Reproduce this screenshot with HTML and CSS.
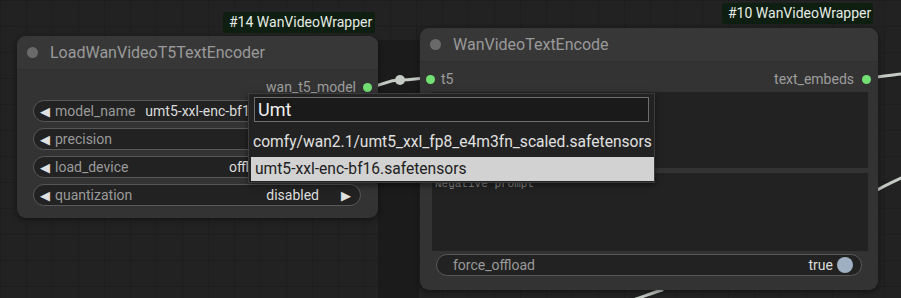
FILE: index.html
```html
<!DOCTYPE html>
<html>
<head>
<meta charset="utf-8">
<link rel="stylesheet" href="styles.css">
</head>
<body>
<div class="canvas">
  <div class="band"></div>
  <svg class="links" width="901" height="298" viewBox="0 0 901 298">
    <path d="M368 87 C 385 86, 385 80, 400 80 S 415 78, 430 78" />
    <circle cx="400" cy="80" r="5" class="mid"/>
    <path d="M867 78 C 880 77, 890 75, 901 74" />
    <path d="M870 194 C 880 188, 890 183, 901 178" />
    <path d="M636 299 C 645 296, 652 293, 662 290" />
  </svg>

  <div class="badge badge-14">#14 WanVideoWrapper</div>
  <div class="badge badge-10">#10 WanVideoWrapper</div>

  <div class="node node-left">
    <div class="node-title"><span class="dot-grey"></span><span>LoadWanVideoT5TextEncoder</span></div>
    <div class="node-body">
      <div class="io-row io-right"><span class="io-label">wan_t5_model</span><span class="slot"></span></div>
      <div class="widgets">
        <div class="widget"><span class="arrow">◀</span><span class="w-name">model_name</span><span class="w-val w-val-left">umt5-xxl-enc-bf16.safetensors</span></div>
        <div class="widget"><span class="arrow">◀</span><span class="w-name">precision</span><span class="fill"></span><span class="w-val">bf16</span><span class="arrow arrow-r">▶</span></div>
        <div class="widget"><span class="arrow">◀</span><span class="w-name">load_device</span><span class="fill"></span><span class="w-val">offload_device</span><span class="arrow arrow-r">▶</span></div>
        <div class="widget"><span class="arrow">◀</span><span class="w-name">quantization</span><span class="fill"></span><span class="w-val">disabled</span><span class="arrow arrow-r">▶</span></div>
      </div>
    </div>
  </div>

  <div class="node node-right">
    <div class="node-title"><span class="dot-grey"></span><span>WanVideoTextEncode</span></div>
    <div class="node-body">
      <div class="io-row"><span class="slot"></span><span class="io-label io-in">t5</span><span class="fill"></span><span class="io-label">text_embeds</span><span class="slot"></span></div>
      <div class="textareas">
        <div class="textarea">positive_prompt</div>
        <div class="textarea ta2">Negative prompt</div>
      </div>
      <div class="widget toggle"><span class="w-name">force_offload</span><span class="fill"></span><span class="w-val">true</span><span class="knob"></span></div>
    </div>
  </div>

  <div class="menu">
    <div class="menu-input">Umt</div>
    <div class="menu-item first">comfy/wan2.1/umt5_xxl_fp8_e4m3fn_scaled.safetensors</div>
    <div class="menu-item active">umt5-xxl-enc-bf16.safetensors</div>
  </div>
</div>
</body>
</html>
```

FILE: styles.css
```css
* { box-sizing: border-box; }
html, body { margin: 0; padding: 0; background: #202020; }
body { font-family: Roboto, "Liberation Sans", Arial, sans-serif; }

.canvas {
  position: relative;
  width: 901px;
  height: 298px;
  overflow: hidden;
  background-color: #222222;
  background-image:
    linear-gradient(to right, rgba(0,0,0,0.12) 1px, transparent 1px),
    linear-gradient(to bottom, rgba(0,0,0,0.12) 1px, transparent 1px);
  background-size: 26px 26px;
}

.band {
  position: absolute;
  left: 378px; top: 40px;
  width: 41px; height: 258px;
  background: #1b1b1b;
}

.links { position: absolute; left: 0; top: 0; }
.links path { fill: none; stroke: #c4cac4; stroke-width: 3; stroke-linecap: round; }
.links .mid { fill: #c4cac4; }

.badge {
  position: absolute;
  height: 21px;
  padding: 0 6px;
  background: #0e1e10;
  color: #e6ece6;
  font-size: 14px;
  line-height: 21px;
  border-radius: 3px;
  white-space: nowrap;
}
.badge-14 { left: 223px; top: 12px; width: 152px; }
.badge-10 { left: 722px; top: 3px; width: 151px; }

.node {
  position: absolute;
  background: #333333;
  border-radius: 9px;
  box-shadow: 0 2px 6px rgba(0,0,0,0.45);
  display: flex;
  flex-direction: column;
}
.node-left { left: 17px; top: 36px; width: 361px; height: 182px; }
.node-right { left: 420px; top: 28px; width: 458px; height: 262px; }

.node-title {
  height: 34px;
  display: flex;
  align-items: center;
  gap: 12px;
  padding-left: 10px;
  background: #373737;
  border-radius: 9px 9px 0 0;
  color: #9a9a9a;
  font-size: 16px;
  border-bottom: 1px solid #2f2f2f;
}
.node-right .node-title { gap: 12px; }
.dot-grey { width: 11px; height: 11px; border-radius: 50%; background: #6a6a6a; flex: none; }

.node-body { display: flex; flex-direction: column; flex: 1; }

.io-row {
  height: 16px;
  display: flex;
  align-items: center;
  font-size: 14px;
  color: #9d9d9d;
}
.io-right { justify-content: flex-end; padding-right: 6px; }
.io-right .io-label { margin-right: 7px; }
.slot { width: 9px; height: 9px; border-radius: 50%; background: #72e072; flex: none; }
.fill { flex: 1; }

.node-left .io-row { margin-top: 9px; }
.node-right .io-row { margin-top: 9px; padding: 0 7px 0 6px; }
.node-right .io-in { margin-left: 6px; }
.node-right .io-label + .slot { margin-left: 8px; }

.widgets { display: flex; flex-direction: column; gap: 6px; margin: 5px 17px 0 16px; }

.widget {
  height: 22px;
  border: 1px solid #575757;
  background: #222222;
  border-radius: 11px;
  display: flex;
  align-items: center;
  padding: 0 9px 0 6px;
  font-size: 14px;
  color: #999;
  white-space: nowrap;
  overflow: hidden;
}
.arrow { color: #e0e0e0; font-size: 13px; margin-right: 5px; }
.arrow-r { margin-right: 0; margin-left: 22px; }
.w-name { color: #9a9a9a; }
.w-val { color: #dcdcdc; }
.w-val-left { margin-left: 10px; }

.textareas { display: flex; flex-direction: column; gap: 5px; margin: 5px 10px 0 12px; }
.textarea {
  height: 76px;
  background: #222222;
  font-family: "Liberation Mono", "DejaVu Sans Mono", monospace;
  font-size: 11px;
  color: #8a8a8a;
  padding: 2px 3px;
}
.ta2 { height: 78px; padding-top: 5px; }

.toggle { margin: 3px 16px 0 16px; padding: 0 8px 0 16px; }
.toggle .w-val { margin-right: 4px; }
.knob { width: 16px; height: 16px; border-radius: 50%; background: #9fb0c2; }

.menu {
  position: absolute;
  left: 248px; top: 93px;
  width: 407px; height: 90px;
  background: #222222;
  border: 1px solid #3c3c3c;
  box-shadow: 0 2px 6px rgba(0,0,0,0.5);
  display: flex;
  flex-direction: column;
  font-family: Roboto, "Liberation Sans", Arial, sans-serif;
}
.menu-input {
  margin: 3px 5px 0 5px;
  height: 25px;
  background: #1a1a1a;
  border: 1px solid #6e6e6e;
  color: #f0f0f0;
  font-size: 18px;
  line-height: 23px;
  padding-left: 3px;
}
.menu-item {
  height: 24px;
  line-height: 24px;
  padding-left: 4px;
  color: #e0e0e0;
  font-size: 15.6px;
  white-space: nowrap;
}
.menu-item.first { margin-top: 8px; height: 27px; }
.menu-item.active { background: #d2d2d2; color: #202020; margin-left: 2px; }
```
